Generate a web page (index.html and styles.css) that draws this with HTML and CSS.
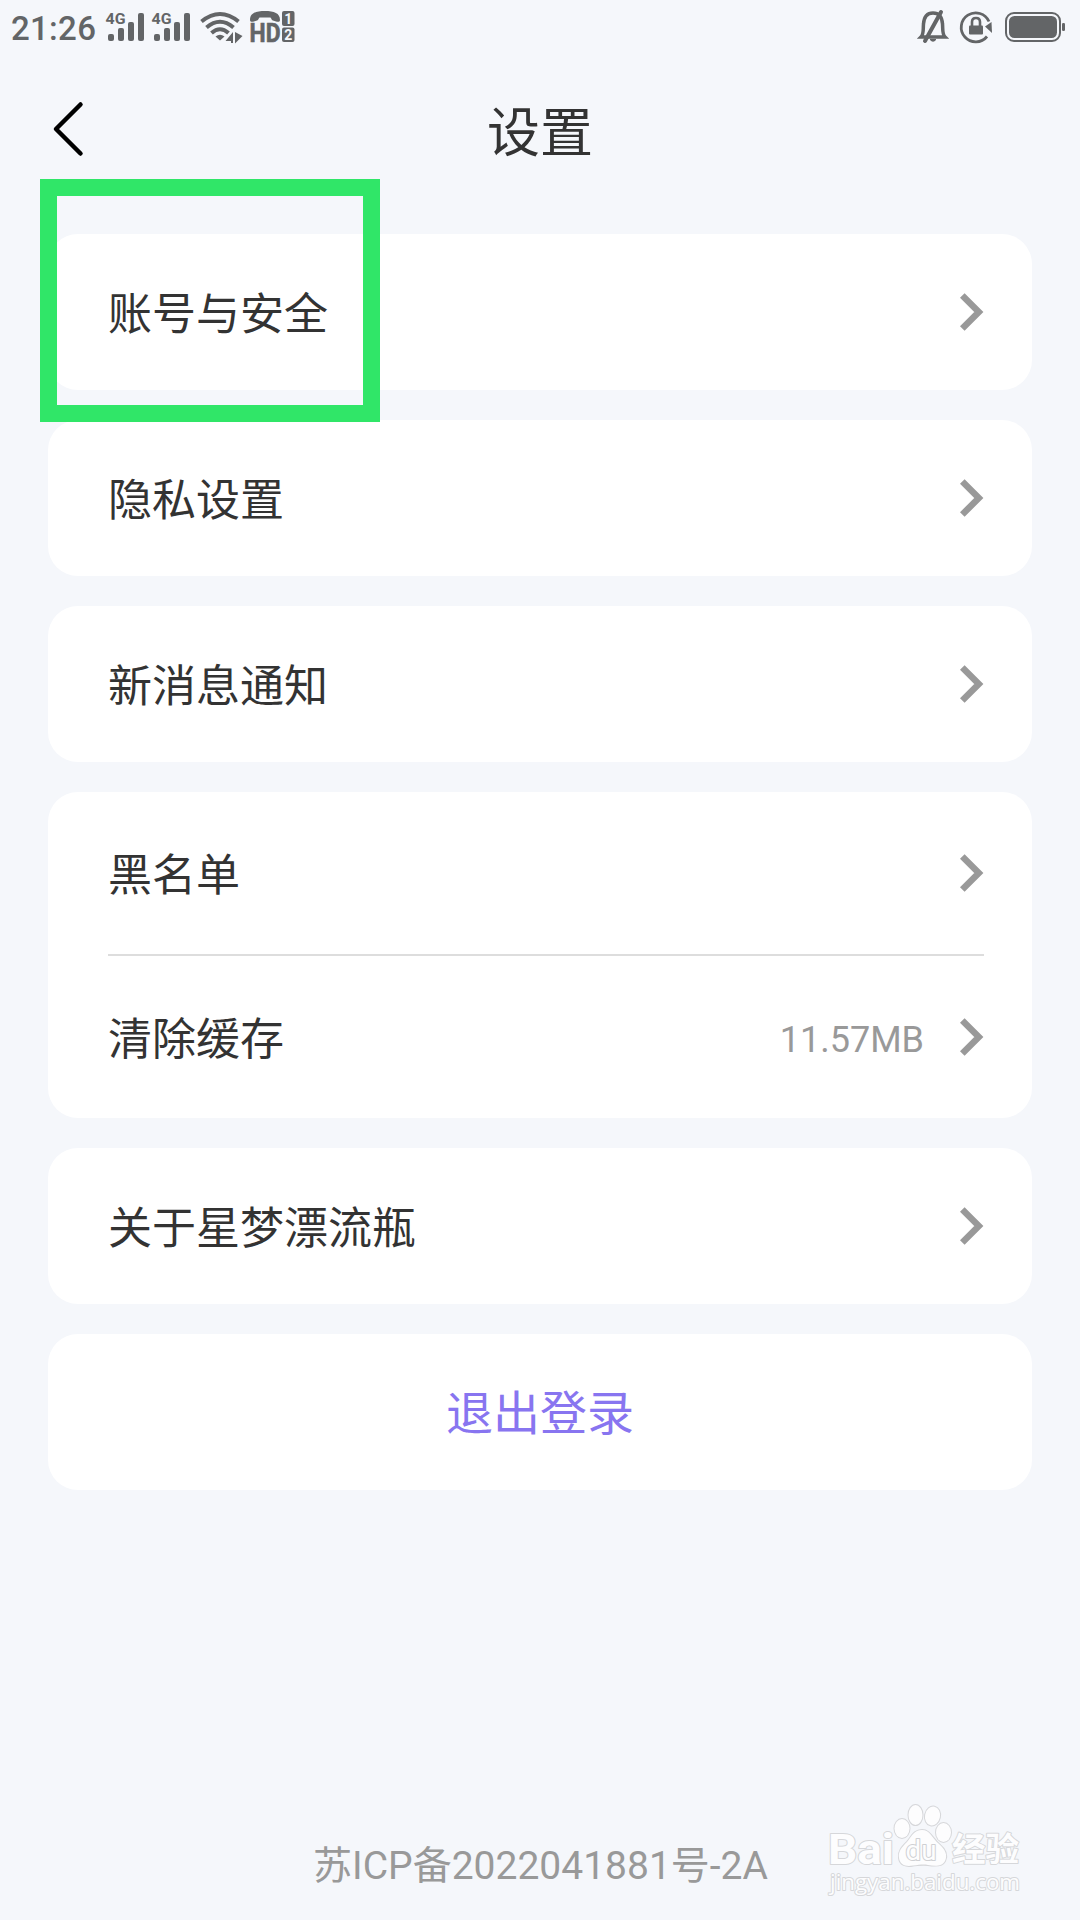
FILE: index.html
```
<!DOCTYPE html>
<html lang="zh-CN">

<head>
    <meta charset="UTF-8">
    <title>设置</title>
    <link rel="stylesheet" href="styles.css">
</head>

<body>
    <!-- status bar -->
    <div class="status-bar">
        <span class="time">21:26</span>
        <svg class="icons-left" width="192" height="40" viewBox="104 8 192 40">
            <g id="signal" fill="#636567">
                <text x="105.500" y="23.500" class="net" textLength="20" lengthAdjust="spacingAndGlyphs">4G</text>
                <rect x="108" y="34" width="6" height="7" rx="2" />
                <rect x="118" y="28" width="6" height="13" rx="2" />
                <rect x="128" y="22" width="6" height="19" rx="2" />
                <rect x="138" y="13" width="6" height="28" rx="2" />
            </g>
            <use href="#signal" x="46" />
            <g fill="none" stroke="#636567" stroke-width="4">
                <path d="M201.500 21.500Q220 6.500 238.500 21.500" />
                <path d="M206.500 27.500Q220 16 233.500 27.500" />
                <path d="M211.500 33Q220 25.500 228.500 33" />
            </g>
            <path d="M215.500 36.500Q220 33 224.500 36.500L220 40.500Z" fill="#636567" />
            <path d="M225.500 41L233 32V43H231V41Z" fill="#636567" />
            <path d="M235 32L242.500 36L235 43.500Z" fill="#636567" />
            <path d="M250 20C250 13 256 11 265 11C274 11 280 13 280 20C280 22 278 22 276 21.500L273 20.500C271 20 271.500 17.500 270 17.500H260C258.500 17.500 259 20 257 20.500L254 21.500C252 22 250 22 250 20Z" fill="#636567" />
            <text x="249.500" y="42" class="hd" textLength="31" lengthAdjust="spacingAndGlyphs">HD</text>
            <rect x="282" y="11" width="12.500" height="15" rx="2" fill="#636567" />
            <rect x="282" y="27.500" width="12.500" height="14.500" rx="2" fill="#636567" />
            <text x="288.200" y="23.500" class="sim">1</text>
            <text x="288.200" y="39.800" class="sim">2</text>
        </svg>
        <svg class="icons-right" width="150" height="40" viewBox="916 8 150 40">
            <path d="M921 37C924 34 923 29 923.500 24C924 16.500 927 13 933 13C939 13 942 16.500 942.500 24C943 29 942 34 945 37Z" fill="none" stroke="#636567" stroke-width="3.500" />
            <path d="M930 39H936V40Q933 43.500 930 40Z" fill="#636567" />
            <path d="M941 12L925 41" stroke="#636567" stroke-width="4" stroke-linecap="round" />
            <path d="M989 21.500A14.500 14.500 0 1 0 987 36.500" fill="none" stroke="#636567" stroke-width="2.800" />
            <path d="M985 26.500L991.500 22L992 33Z" fill="#636567" />
            <rect x="969" y="25.500" width="14" height="9" rx="1" fill="#636567" />
            <path d="M972 26V22Q972 18 976 18Q980 18 980 22V26" fill="none" stroke="#636567" stroke-width="2.600" />
            <rect x="1006" y="13" width="54" height="28" rx="8" fill="none" stroke="#636567" stroke-width="2" />
            <rect x="1009" y="16" width="48" height="22" rx="5.500" fill="#636567" />
            <rect x="1062" y="23" width="3" height="8" rx="1.300" fill="#636567" />
        </svg>
    </div>

    <header class="header">
        <svg class="back" width="34" height="60" viewBox="0 0 34 60">
            <path d="M29.500 6.500L5 31L29.500 55.500" />
        </svg>
        <h1>设置</h1>
    </header>

    <main class="list">
        <div class="card">
            <div class="row">
                <span class="label">账号与安全</span>
                <svg class="arrow" viewBox="0 0 24 38"><path d="M2.300 2.500L18.800 19L2.300 35.500" /></svg>
            </div>
        </div>
        <div class="card">
            <div class="row">
                <span class="label">隐私设置</span>
                <svg class="arrow" viewBox="0 0 24 38"><path d="M2.300 2.500L18.800 19L2.300 35.500" /></svg>
            </div>
        </div>
        <div class="card">
            <div class="row">
                <span class="label">新消息通知</span>
                <svg class="arrow" viewBox="0 0 24 38"><path d="M2.300 2.500L18.800 19L2.300 35.500" /></svg>
            </div>
        </div>
        <div class="card group">
            <div class="row">
                <span class="label">黑名单</span>
                <svg class="arrow" viewBox="0 0 24 38"><path d="M2.300 2.500L18.800 19L2.300 35.500" /></svg>
            </div>
            <div class="row">
                <span class="label">清除缓存</span>
                <span class="value">11.57MB</span>
                <svg class="arrow" viewBox="0 0 24 38"><path d="M2.300 2.500L18.800 19L2.300 35.500" /></svg>
            </div>
        </div>
        <div class="card">
            <div class="row">
                <span class="label">关于星梦漂流瓶</span>
                <svg class="arrow" viewBox="0 0 24 38"><path d="M2.300 2.500L18.800 19L2.300 35.500" /></svg>
            </div>
        </div>
        <div class="card">
            <div class="row logout">退出登录</div>
        </div>
    </main>

    <footer class="footer">苏ICP备2022041881号-2A</footer>

    <!-- highlight box -->
    <div class="highlight"></div>

    <!-- watermark -->
    <svg class="watermark" width="210" height="110" viewBox="820 1795 210 110">
        <g class="mark">
            <text x="828" y="1863.500" class="mark-bai" textLength="66" lengthAdjust="spacingAndGlyphs">Bai</text>
            <text x="952" y="1861" class="mark-cn" textLength="67" lengthAdjust="spacingAndGlyphs">经验</text>
            <ellipse cx="902" cy="1828.500" rx="7.500" ry="9.500" />
            <ellipse cx="915.500" cy="1815" rx="7" ry="10" />
            <ellipse cx="932.500" cy="1816" rx="7.500" ry="9.500" transform="rotate(12 932.500 1816)" />
            <ellipse cx="943.500" cy="1832.500" rx="7.500" ry="9.500" />
            <path d="M922 1830C930 1830 932 1838 939 1844C945 1849 948 1855 945 1861C942 1867 934 1866 928 1865C923 1864 919 1865 913 1865.500C906 1867 900 1865 899 1858C898 1851 902 1847 907 1842C912 1836 914 1830 922 1830Z" />
            <text x="905.500" y="1859.500" class="mark-du" textLength="31" lengthAdjust="spacingAndGlyphs">du</text>
            <text x="830" y="1890" class="mark-url" textLength="190" lengthAdjust="spacingAndGlyphs">jingyan.baidu.com</text>
        </g>
    </svg>
</body>

</html>
```
FILE: styles.css
```
* {
    box-sizing: border-box;
}

body {
    margin: 0;
    width: 1080px;
    height: 1920px;
    position: relative;
    overflow: hidden;
    display: flex;
    flex-direction: column;
    background-color: #f5f7fb;
    color: #333333;
    font-family: Roboto, "Noto Sans CJK SC", sans-serif;
}

svg {
    display: block;
    flex: none;
}

/* Status bar */
.status-bar {
    display: flex;
    height: 56px;
    padding: 8px 14px 0 11px;
    color: #636567;
}

.time {
    width: 93px;
    padding-top: 1px;
    font-size: 33px;
    font-weight: 500;
    line-height: 40px;
    letter-spacing: 0.3px;
    white-space: nowrap;
}

.icons-right {
    margin-left: auto;
}

.net {
    font-size: 15px;
    font-weight: 700;
}

.hd {
    font-size: 26px;
    font-weight: 700;
    fill: #636567;
    stroke: #636567;
    stroke-width: 0.6;
}

.sim {
    font-size: 14px;
    font-weight: 700;
    fill: #f5f7fb;
    text-anchor: middle;
}

/* Header */
.header {
    display: grid;
    grid-template-columns: 34px 1fr 34px;
    align-items: center;
    height: 144px;
    padding: 0 51px;
}

.back {
    fill: none;
    stroke: #000000;
    stroke-width: 4.5;
    stroke-linecap: round;
    stroke-linejoin: round;
}

h1 {
    margin: 11px 0 0;
    font-size: 53px;
    font-weight: 400;
    line-height: 70px;
    text-align: center;
}

/* Settings list */
.list {
    display: flex;
    flex-direction: column;
    gap: 30px;
    padding: 34px 48px 0;
}

.card {
    padding: 0 48px 0 60px;
    background-color: #ffffff;
    border-radius: 30px;
}

.row {
    display: flex;
    align-items: center;
    height: 156px;
    font-size: 44px;
}

.group .row {
    height: 162px;
}

.group .row + .row {
    height: 164px;
    border-top: 2px solid #dddddd;
}

.label {
    flex: 1;
    padding-bottom: 2px;
}

.value {
    margin-right: 36px;
    padding-top: 6px;
    color: #999999;
    font-size: 36px;
}

.arrow {
    width: 24px;
    height: 38px;
    fill: none;
    stroke: #999999;
    stroke-width: 6.5;
}

.logout {
    justify-content: center;
    padding: 0 12px 5px 0;
    color: #8875f0;
    font-size: 47px;
}

.footer {
    margin-top: auto;
    padding: 0 0 25px 1px;
    color: #999999;
    font-size: 39px;
    line-height: 58px;
    text-align: center;
}

.highlight {
    position: absolute;
    left: 40px;
    top: 179px;
    width: 340px;
    height: 243px;
    border: 17px solid #30e668;
}

/* Watermark */
.watermark {
    position: absolute;
    left: 820px;
    top: 1795px;
}

.mark {
    fill: #fdfdfe;
    stroke: #d6d7da;
    stroke-width: 2;
    stroke-linejoin: round;
    paint-order: stroke;
}

.mark-bai {
    font-size: 42px;
    font-weight: 700;
}

.mark-cn {
    font-size: 33px;
    font-weight: 700;
}

.mark-du {
    font-size: 27px;
    stroke: #cfd0d3;
}

.mark-url {
    font-family: "Open Sans", sans-serif;
    font-size: 22px;
}
```
